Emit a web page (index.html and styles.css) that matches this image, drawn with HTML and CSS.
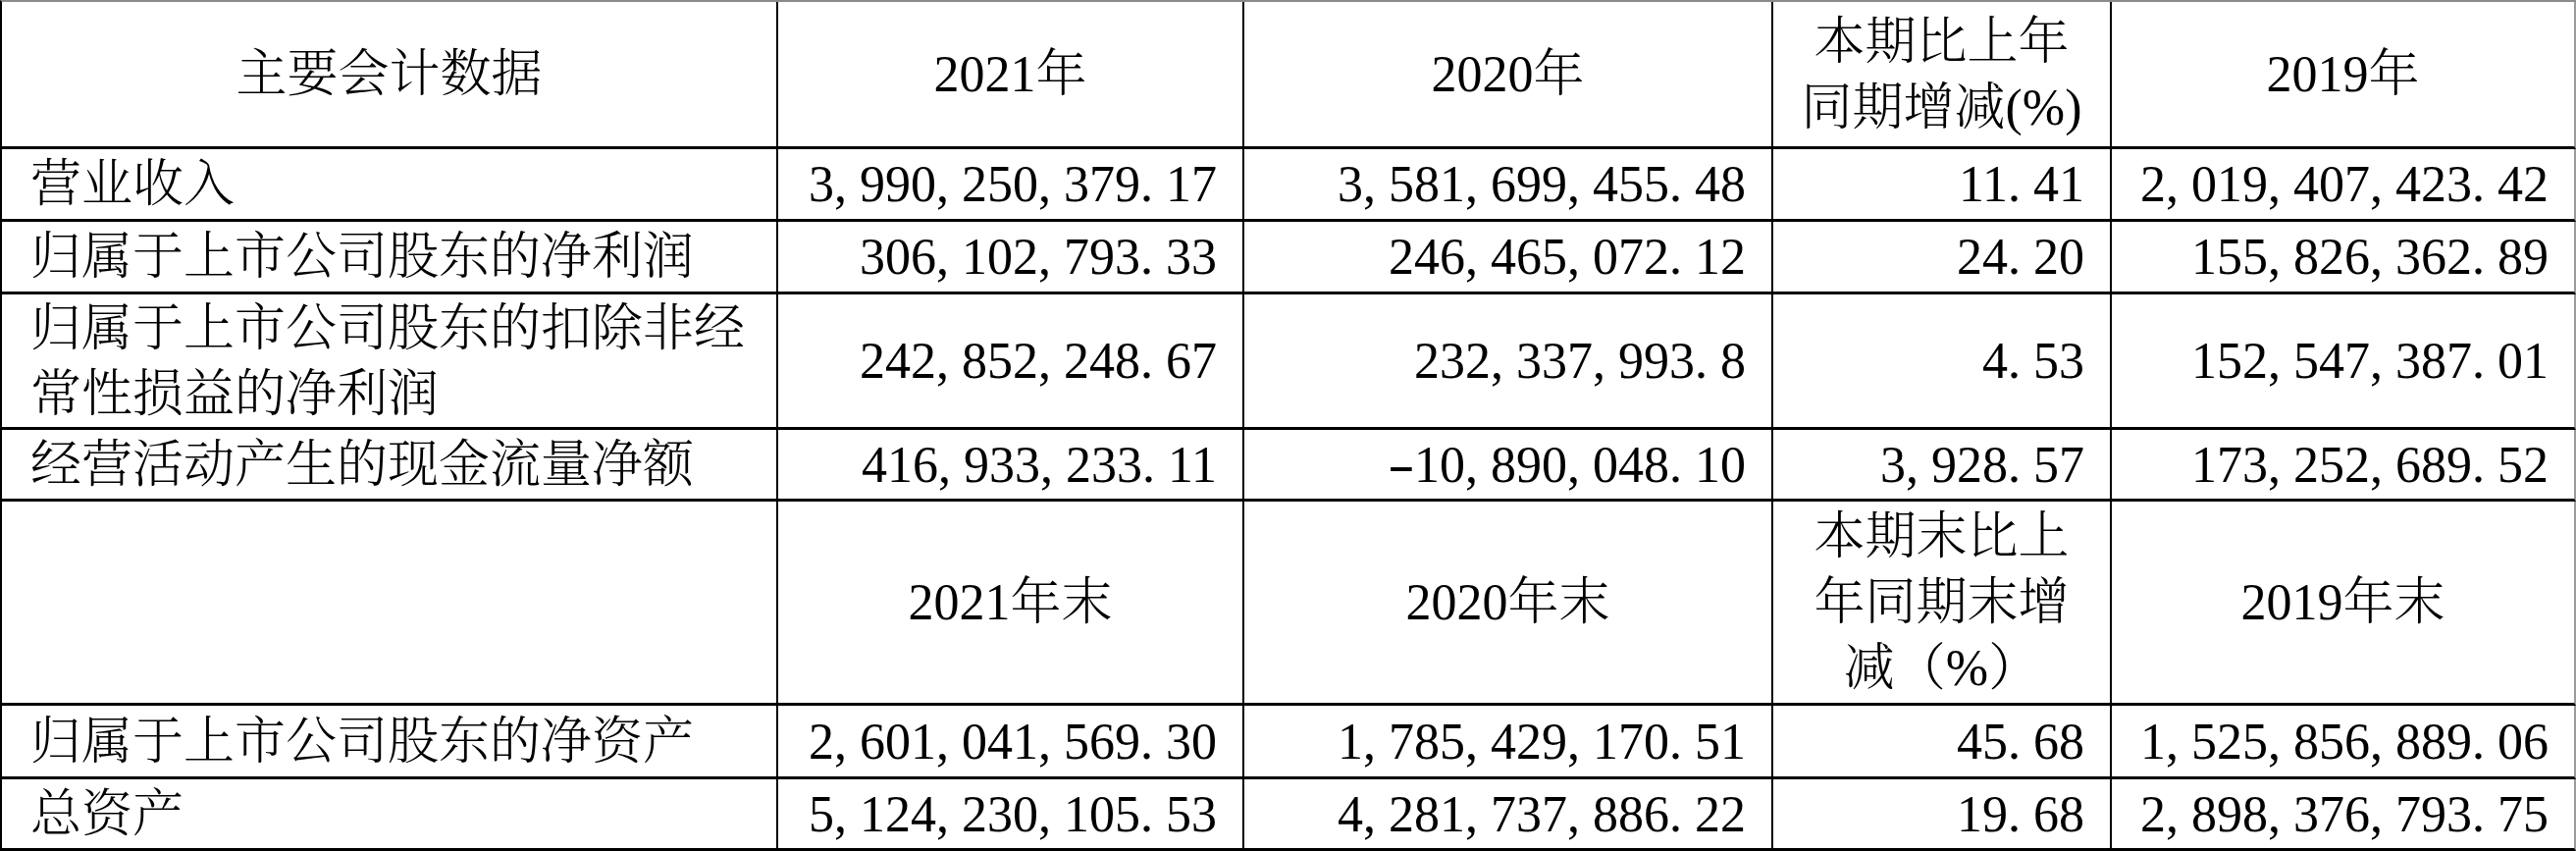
FILE: index.html
```html
<!DOCTYPE html>
<html lang="zh-CN">
<head>
<meta charset="utf-8">
<title>主要会计数据</title>
<link rel="stylesheet" href="styles.css">
</head>
<body>
<div class="sheet">
  <div class="cell head">主要会计数据</div>
  <div class="cell head">2021年</div>
  <div class="cell head">2020年</div>
  <div class="cell head">本期比上年<br>同期增减(%)</div>
  <div class="cell head">2019年</div>

  <div class="cell label">营业收入</div>
  <div class="cell num">3<span class="p">,</span>990<span class="p">,</span>250<span class="p">,</span>379<span class="p">.</span>17</div>
  <div class="cell num">3<span class="p">,</span>581<span class="p">,</span>699<span class="p">,</span>455<span class="p">.</span>48</div>
  <div class="cell num">11<span class="p">.</span>41</div>
  <div class="cell num">2<span class="p">,</span>019<span class="p">,</span>407<span class="p">,</span>423<span class="p">.</span>42</div>

  <div class="cell label">归属于上市公司股东的净利润</div>
  <div class="cell num">306<span class="p">,</span>102<span class="p">,</span>793<span class="p">.</span>33</div>
  <div class="cell num">246<span class="p">,</span>465<span class="p">,</span>072<span class="p">.</span>12</div>
  <div class="cell num">24<span class="p">.</span>20</div>
  <div class="cell num">155<span class="p">,</span>826<span class="p">,</span>362<span class="p">.</span>89</div>

  <div class="cell label">归属于上市公司股东的扣除非经<br>常性损益的净利润</div>
  <div class="cell num">242<span class="p">,</span>852<span class="p">,</span>248<span class="p">.</span>67</div>
  <div class="cell num">232<span class="p">,</span>337<span class="p">,</span>993<span class="p">.</span>8</div>
  <div class="cell num">4<span class="p">.</span>53</div>
  <div class="cell num">152<span class="p">,</span>547<span class="p">,</span>387<span class="p">.</span>01</div>

  <div class="cell label">经营活动产生的现金流量净额</div>
  <div class="cell num">416<span class="p">,</span>933<span class="p">,</span>233<span class="p">.</span>11</div>
  <div class="cell num"><span class="p minus">-</span>10<span class="p">,</span>890<span class="p">,</span>048<span class="p">.</span>10</div>
  <div class="cell num">3<span class="p">,</span>928<span class="p">.</span>57</div>
  <div class="cell num">173<span class="p">,</span>252<span class="p">,</span>689<span class="p">.</span>52</div>

  <div class="cell label"></div>
  <div class="cell head">2021年末</div>
  <div class="cell head">2020年末</div>
  <div class="cell head">本期末比上<br>年同期末增<br>减（%）</div>
  <div class="cell head">2019年末</div>

  <div class="cell label">归属于上市公司股东的净资产</div>
  <div class="cell num">2<span class="p">,</span>601<span class="p">,</span>041<span class="p">,</span>569<span class="p">.</span>30</div>
  <div class="cell num">1<span class="p">,</span>785<span class="p">,</span>429<span class="p">,</span>170<span class="p">.</span>51</div>
  <div class="cell num">45<span class="p">.</span>68</div>
  <div class="cell num">1<span class="p">,</span>525<span class="p">,</span>856<span class="p">,</span>889<span class="p">.</span>06</div>

  <div class="cell label">总资产</div>
  <div class="cell num">5<span class="p">,</span>124<span class="p">,</span>230<span class="p">,</span>105<span class="p">.</span>53</div>
  <div class="cell num">4<span class="p">,</span>281<span class="p">,</span>737<span class="p">,</span>886<span class="p">.</span>22</div>
  <div class="cell num">19<span class="p">.</span>68</div>
  <div class="cell num">2<span class="p">,</span>898<span class="p">,</span>376<span class="p">,</span>793<span class="p">.</span>75</div>
</div>
</body>
</html>
```
FILE: styles.css
```css
html, body {
  margin: 0;
  padding: 0;
  background: #ffffff;
}

body {
  width: 2625px;
  height: 867px;
  overflow: hidden;
}

.sheet {
  display: grid;
  grid-template-columns: 791px 475px 539px 345px 473px;
  grid-template-rows: 150px 74px 74px 138px 73px 208px 75px 73px;
  border-left: 2px solid #000;
  border-top: 2px solid #8a8a8a;
  font-family: "Liberation Serif", "Noto Serif CJK SC", "Noto Serif SC", "Source Han Serif SC", "AR PL UMing CN", "SimSun", "Noto Sans CJK SC", serif;
  font-size: 52px;
  font-weight: 300;
  line-height: 67px;
  color: #000;
}

.cell {
  box-sizing: border-box;
  border-right: 2px solid #000;
  border-bottom: 3px solid #000;
  display: flex;
  align-items: center;
  white-space: nowrap;
}

.cell:nth-child(5n) {
  border-right-color: #9a9a9a;
}

.head {
  justify-content: center;
  text-align: center;
}

.label {
  justify-content: flex-start;
  padding-left: 29px;
}

.num {
  justify-content: flex-end;
  padding-right: 26px;
}

.p {
  display: inline-block;
  width: 0.5em;
  text-align: left;
}

.minus {
  text-align: center;
  transform: scaleX(1.6);
}
```
